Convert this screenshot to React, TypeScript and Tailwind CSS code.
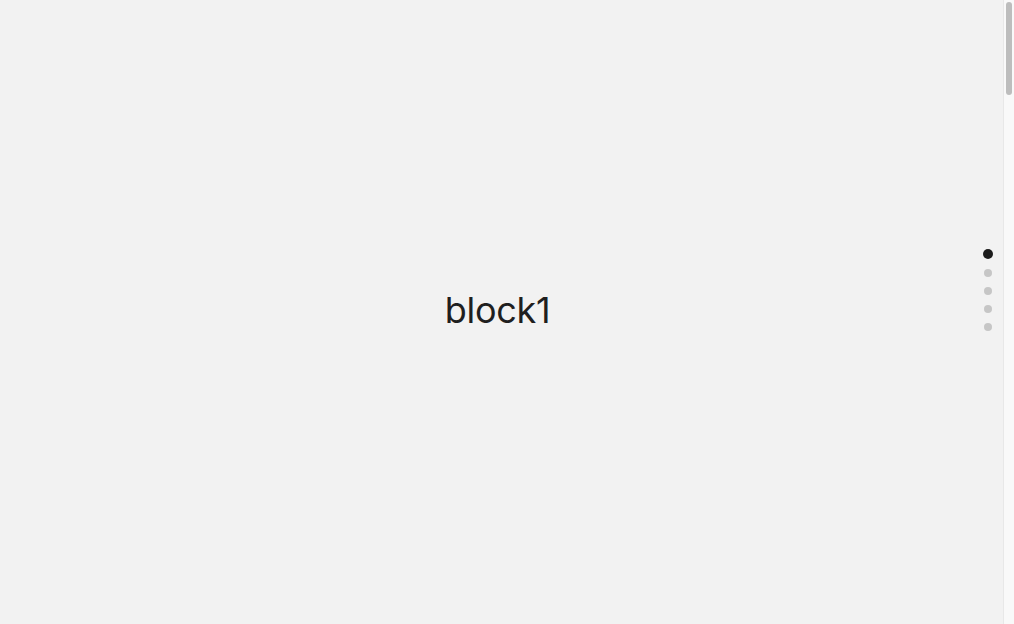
import React, { useState } from 'react';

const blocks = ['block1', 'block2', 'block3', 'block4', 'block5'];

export default function App() {
  const [active, setActive] = useState(0);

  return (
    <div className="h-screen flex bg-[#f2f2f2] text-[#1f1f1f] font-['Inter','Noto_Sans',sans-serif] overflow-hidden">
      <main className="flex-1 flex items-center justify-center pr-[8px]">
        <h2 className="text-[36px] font-normal leading-none tracking-[-0.3px] pb-[4px]">{blocks[active]}</h2>
      </main>

      {/* page scrollbar */}
      <div className="w-[11px] h-full bg-[#f9f9f9] border-l border-[#e8e8e8] pt-[2px] px-[2px]">
        <div className="h-[93px] w-full rounded-full bg-[#bdbdbd]" />
      </div>

      <nav className="fixed top-[249px] right-[21px] w-[10px] flex flex-col items-center">
        {blocks.map((label, i) => (
          <button
            key={label}
            onClick={() => setActive(i)}
            aria-label={label}
            className={
              i === active
                ? 'w-[10px] h-[10px] rounded-full bg-[#1c1c1c]'
                : 'w-[8px] h-[8px] rounded-full bg-[#c6c6c6] mt-[10px]'
            }
          />
        ))}
      </nav>
    </div>
  );
}
